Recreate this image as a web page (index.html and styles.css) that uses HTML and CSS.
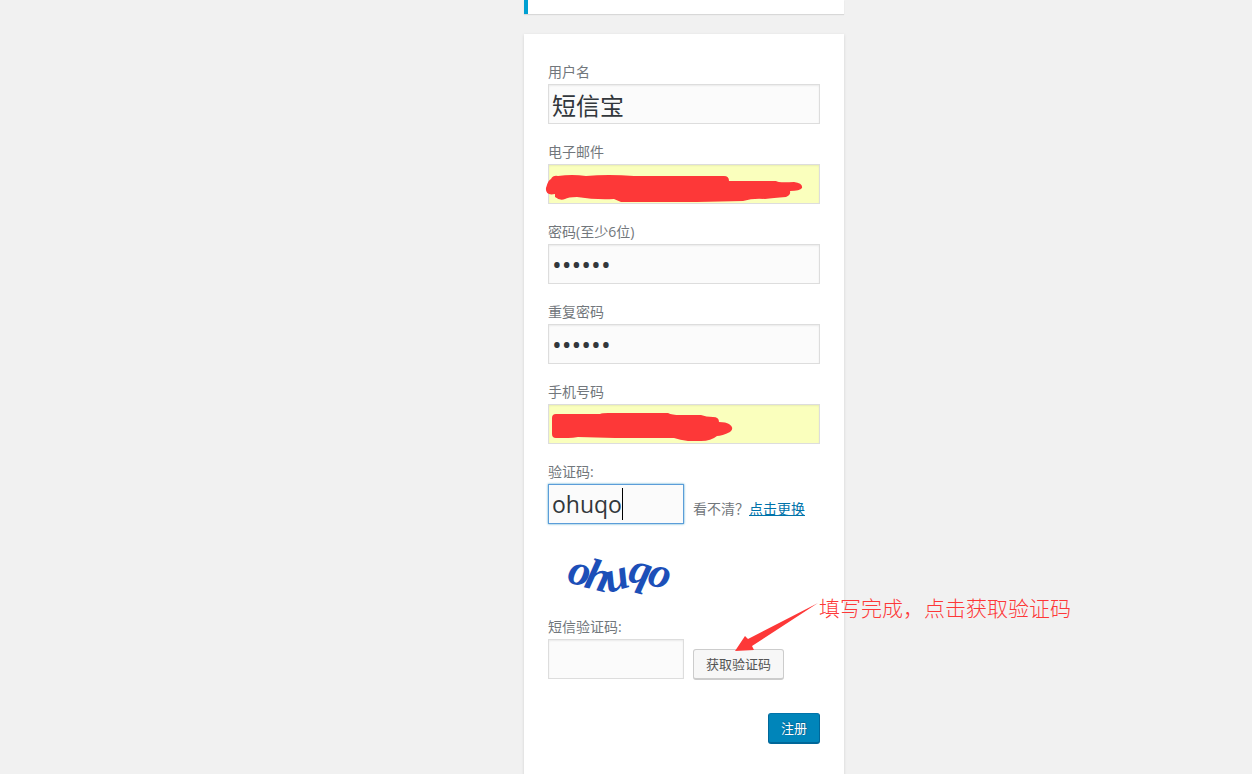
FILE: index.html
```html
<!DOCTYPE html>
<html lang="zh-CN">
<head>
  <meta charset="UTF-8">
  <title>注册</title>
  <link rel="stylesheet" href="styles.css">
</head>
<body>
  <main class="login">
    <div class="message"></div>
    <form class="register-form">
      <div class="field">
        <label for="user_login">用户名</label>
        <input type="text" id="user_login" class="input" value="短信宝">
      </div>
      <div class="field">
        <label for="user_email">电子邮件</label>
        <input type="text" id="user_email" class="input filled">
        <svg class="scribble" viewBox="0 0 272 40" aria-hidden="true">
          <path d="M3 15 Q5 11 10 12 Q24 10 38 12 Q60 10 86 12 L176 12 Q181 12 181 17 L228 17 Q230 19 246 18 Q255 19 254 24 Q252 27 242 27 Q243 31 238 33 Q225 34 217 35 Q205 34 195 37 L149 38 L73 38 L66 35 Q48 36 29 33 Q20 33 17 35 Q12 37 7 33 L7 30 Q-3 32 -2 24 Q0 16 3 15 Z"/>
        </svg>
      </div>
      <div class="field">
        <label for="pwd1">密码(至少6位)</label>
        <input type="password" id="pwd1" class="input" value="123456">
      </div>
      <div class="field">
        <label for="pwd2">重复密码</label>
        <input type="password" id="pwd2" class="input" value="123456">
      </div>
      <div class="field">
        <label for="phone">手机号码</label>
        <input type="text" id="phone" class="input filled">
        <svg class="scribble" viewBox="0 0 272 40" aria-hidden="true">
          <path d="M8 10 L52 10 Q54 9 60 9 L120 9 Q124 11 132 11 L153 11 Q158 13 165 13 Q171 13 171 18 Q178 18 181 20 Q187 24 182 28 Q174 32 169 32 Q163 37 153 37 L140 37 Q132 36 126 34 L67 34 L30 33 Q25 34 20 34 L8 34 Q4 34 4 30 L4 14 Q4 10 8 10 Z"/>
        </svg>
      </div>
      <div class="field captcha-field">
        <label for="captcha">验证码:</label>
        <div class="row">
          <div class="half">
            <input type="text" id="captcha" class="input active" value="ohuqo">
            <span class="caret"></span>
          </div>
          <span class="hint">看不清？<a href="#">点击更换</a></span>
        </div>
        <svg class="captcha" viewBox="0 0 140 60" width="140" height="60" role="img" aria-label="ohuqo">
          <text transform="translate(18 42) rotate(14)">o</text>
          <text transform="translate(35 47) rotate(14)">h</text>
          <text transform="translate(60 53) rotate(-16)">u</text>
          <text transform="translate(79 41) rotate(14)">q</text>
          <text transform="translate(98 44) rotate(16)">o</text>
        </svg>
      </div>
      <div class="field sms-field">
        <label for="sms_code">短信验证码:</label>
        <div class="row">
          <div class="half">
            <input type="text" id="sms_code" class="input">
          </div>
          <button type="button" class="button">获取验证码</button>
          <div class="note">
            <svg viewBox="0 0 84 50" width="84" height="50" aria-hidden="true">
              <path d="M83 1 L17 44 L19 48 L0 49 L10 34 L13 37 Z"/>
            </svg>
            <span>填写完成，点击获取验证码</span>
          </div>
        </div>
      </div>
      <div class="submit">
        <button type="submit" class="button button-primary">注册</button>
      </div>
    </form>
  </main>
</body>
</html>
```
FILE: styles.css
```css
body {
  margin: 0;
  padding-left: 116px;
  background: #f1f1f1;
  color: #72777c;
  font-family: "Open Sans", "Noto Sans CJK SC", sans-serif;
  font-size: 14px;
  line-height: 24px;
}

* {
  box-sizing: border-box;
}

.login {
  max-width: 320px;
  margin: 0 auto;
}

.message {
  padding: 7px 12px;
  border-left: 4px solid #00a0d2;
  background: #fff;
  box-shadow: 0 1px 1px rgba(0, 0, 0, 0.1);
}

.register-form {
  margin-top: 20px;
  padding: 26px 24px 46px;
  background: #fff;
  box-shadow: 0 1px 3px rgba(0, 0, 0, 0.13);
}

.field {
  position: relative;
  margin-bottom: 16px;
}

label {
  display: block;
}

.input {
  display: block;
  width: 100%;
  height: 40px;
  margin: 0;
  padding: 3px;
  border: 1px solid #ddd;
  border-radius: 0;
  outline: none;
  background: #fbfbfb;
  box-shadow: inset 0 1px 2px rgba(0, 0, 0, 0.07);
  color: #32373c;
  font-family: inherit;
  font-size: 24px;
}

.input[type="password"] {
  font-size: 26px;
}

.filled {
  background: #faffbd;
}

.input:focus,
.active {
  border-color: #5b9dd9;
  box-shadow: 0 0 2px rgba(30, 140, 190, 0.8);
}

.active {
  font-size: 23px;
}

.row {
  display: flex;
  gap: 9px;
}

.half {
  position: relative;
  width: 50%;
}

.caret {
  position: absolute;
  top: 4px;
  left: 74px;
  width: 1px;
  height: 32px;
  background: #000;
}

.hint {
  padding-top: 13px;
}

a {
  color: #0073aa;
}

.captcha {
  display: block;
  margin-top: 16px;
  overflow: visible;
}

.captcha text {
  fill: #1c4fb8;
  font-family: "Liberation Serif", serif;
  font-size: 44px;
  font-style: italic;
  font-weight: bold;
}

.captcha-field {
  margin-bottom: 15px;
}

.sms-field {
  margin-bottom: 33px;
}

.button {
  height: 31px;
  padding: 0 12px 2px;
  border: 1px solid #ccc;
  border-bottom-width: 2px;
  border-radius: 3px;
  background: #f7f7f7;
  color: #555;
  font-family: inherit;
  font-size: 13px;
  cursor: pointer;
}

.row .button {
  margin-top: 10px;
}

.button-primary {
  border-color: #0073aa #006799 #006799;
  background: #0085ba;
  color: #fff;
  text-shadow: 0 -1px 1px #006799, 1px 0 1px #006799;
}

.submit {
  display: flex;
  justify-content: flex-end;
}

/* drawn over the form */
.scribble {
  position: absolute;
  top: 24px;
  left: 0;
  width: 100%;
  height: 40px;
  overflow: visible;
  fill: #fd3838;
}

.note {
  position: absolute;
  top: -20px;
  left: 187px;
  display: flex;
  color: #fd3838;
  font-family: "Noto Sans CJK SC", sans-serif;
  font-size: 21px;
  font-weight: 300;
  white-space: nowrap;
}

.note svg {
  margin-top: 7px;
  fill: #fd3838;
}
```
